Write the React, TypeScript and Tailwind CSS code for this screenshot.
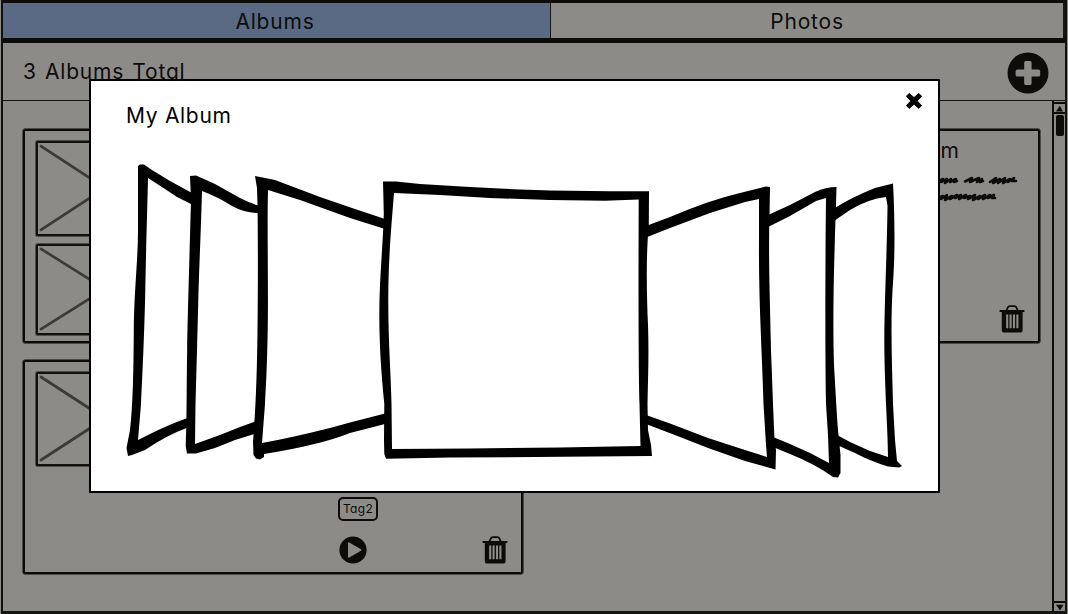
import React from "react";

const INK = "#0d0c0a";
const PAPER = "#8d8b88";

function TrashIcon() {
  return (
    <svg width="26" height="28" viewBox="0 0 26 28" className="block shrink-0">
      <path d="M7.5 5.5 L8.7 2.6 Q9.4 1.2 10.8 1.2 H15.4 Q16.8 1.2 17.5 2.6 L18.7 5.5" fill="none" stroke={INK} strokeWidth="1.8" />
      <path d="M0.6 4.9 H25.4 V6.9 H23.6 V25 Q23.6 27.6 21 27.6 H5.4 Q2.8 27.6 2.8 25 V6.9 H0.6 Z" fill={INK} />
      <path d="M8.2 9.4 V23.2 M11.6 9.4 V23.2 M15 9.4 V23.2 M18.4 9.4 V23.2" stroke={PAPER} strokeWidth="2.1" />
    </svg>
  );
}

function PlusIcon() {
  return (
    <svg width="42" height="42" viewBox="0 0 42 42" className="block shrink-0">
      <circle cx="21" cy="21" r="20.5" fill={INK} />
      <path
        d="M18.8 9 H23 Q24.6 9 24.6 10.6 V17.4 H31.5 Q33.2 17.4 33.2 19 V23 Q33.2 24.6 31.5 24.6 H24.6 V31.4 Q24.6 33 23 33 H18.8 Q17.2 33 17.2 31.4 V24.6 H10.3 Q8.6 24.6 8.6 23 V19 Q8.6 17.4 10.3 17.4 H17.2 V10.6 Q17.2 9 18.8 9 Z"
        fill={PAPER}
      />
    </svg>
  );
}

function PlayIcon() {
  return (
    <svg width="28" height="28" viewBox="0 0 28 28" className="block shrink-0">
      <circle cx="14" cy="14" r="13.6" fill={INK} />
      <path d="M9 7.3 Q9 5.9 10.3 6.6 L22 13.2 Q23 14 22 14.7 L10.3 21.4 Q9 22.1 9 20.7 Z" fill={PAPER} />
    </svg>
  );
}

function CloseIcon() {
  return (
    <svg width="16" height="16" viewBox="0 0 16 16" className="block">
      <path
        d="M3.2 0.4 L8 4.6 L12.8 0.4 L15.6 3.2 L11.2 7.9 L15.6 12.6 L12.8 15.4 L8 11.2 L3.2 15.4 L0.4 12.6 L4.8 7.9 L0.4 3.2 Z"
        fill="#000"
        stroke="#000"
        strokeWidth="0.9"
        strokeLinejoin="round"
      />
    </svg>
  );
}

function Scribble() {
  return (
    <svg width="150" height="30" viewBox="870 174 150 30" className="block">
      <g fill="none" stroke={INK} strokeWidth="2.6" strokeLinecap="round" strokeLinejoin="round">
        <path d="M936 182 L942 179 L940 182 L946 179 L944 183 L950 179 L949 182 L955 179 L953 182 L956 181" />
        <path d="M964 181.5 L971 178 L969 182 L971 181 L978 178 L976 182 L981 179 L979 182 L982 181" />
        <path d="M989 182 L995 178 L992 183 L999 179 L997 183 L1004 178 L1002 183 L1009 179 L1007 182 L1013 178 L1011 181 L1015 181" />
        <path d="M936 198 L942 196 L940 199 L946 195 L944 200 L951 196 L949 199 L956 195 L954 198 L960 195 L958 199 L965 195 L963 198 L969 196 L967 199 L974 195 L972 200 L979 196 L977 199 L984 195 L982 199 L989 195 L987 198 L993 195 L991 198 L994 198" />
      </g>
    </svg>
  );
}

function Thumb({ className }: { className: string }) {
  return (
    <div className={`w-[138px] rounded-[1px] border-2 border-[#12110f] shadow-[0_0_0_0.5px_#12110f] ${className}`}>
      <svg width="100%" height="100%" viewBox="0 0 134 90" preserveAspectRatio="none" className="block">
        <path d="M3 3 L131 86 M3 86 L131 3" stroke="#3b3a39" strokeWidth="2.7" strokeLinecap="round" />
      </svg>
    </div>
  );
}

function Carousel() {
  return (
    <svg width="790" height="325" viewBox="120 158 790 325" className="block">
      <g fill="#000">
        <path d="M138 166 L140 164.5 L144 164.5 L152 170 L170 181 L192 193 V204.5 L177 197 L165 189 L148 178 C147 220 146 250 145.3 290 C144.5 330 142.5 375 141 404 L138 440 L150 434 Q170 424 189 417.5 V427 Q165 436 145 450 L132 455 L128 456 L126.5 448 L130 430 C133 404 133.5 370 133.8 330 C134 290 138.5 255 138 225 Z" />
        <path d="M190 176 L196 175.5 L215 184 L240 198 Q250 203 258 205.5 V213 Q245 213 232 206 Q218 197 202 191 C201 230 199 270 198.3 300 L197 350 L195.5 404 L195 444 L220 435 L240 427 L258 420.5 V433 L235 440 L215 448 L196 453.5 L187 453.5 L185.7 446 C187 420 186.5 380 187.2 350 C187.5 320 190 240 191 200 Z" />
        <path d="M255 176 L275 180 L320 197 L352 208 L385 219 V229 L350 218 L300 200 L268 190 C267 230 268.5 290 267.7 330 C267 370 266 385 265 404 L262 443 Q290 438 330 428 L350 422.5 L385 413.5 V424 L350 433 Q320 445 264 454 L264 457 L260 459.5 L256 458.5 L253.5 455 L253 442 C256 404 257 370 257.5 330 C258 290 258 240 257.5 205 L257 188 Z" />
        <path
          fillRule="evenodd"
          d="M383 181.5 H396 L420 184 L470 187 L520 189.5 L550 190.5 L610 191.2 H649 L648.8 225 C646 255 646.5 290 648 325 C649 355 648 380 647.5 404 L648 430 L651 445 L652 456 L535 457 L450 457.5 L386 458.7 L384.3 454 L384 440 L384.3 404 C381 370 379.4 345 379.3 315 C379.2 280 383 245 383.8 214 Z M394 193 C392 220 388.5 255 388.3 295 C388 340 391 375 391.5 404 L392 449 L470 448.5 L560 447.5 L640.5 446 L639.5 404 C638.4 360 638.4 280 638.7 199.5 L605 200.7 L550 200 L490 198 L440 195 Z"
        />
        <path d="M646 226 L670 217 Q710 200 740 193 L766 186.5 L770 187 L769.5 215 C768.3 260 770 300 771 350 L773 404 L774.5 440 L776 450 L775.5 469.5 L745 461 L708 448 L680 437 L646 424 V415 L670 423.5 L708 438 L745 450 L767 457 L766 445 L763.5 404 C762 350 758.5 300 759 240 V199 L745 202 L710 213 L670 228 L646 237.5 Z" />
        <path d="M768 215 L790 205 L815 192 Q826 187 836.5 187 L836 205 C834 260 832.5 320 834 365 C835.5 390 836.5 410 838 430 L840.5 455 L840.5 473 L838 477.5 L833 477 Q815 464 790 454 L773 447 V437 L790 444 L810 453 L829 463 L828 435 L826 404 C825 350 825.3 260 826 198 L816 201 L790 216 L768 227 Z" />
        <path d="M834 208.5 Q850 198 875 188 L893 183.5 C894 200 895.5 240 893.5 275 C890 320 892 360 893 404 L895 440 L897 461 L902 466 L899 467.5 L888 466.5 Q870 461 855 453 L837 445 V435 L850 442 L870 451 L888 457 C888 430 884.5 390 884.3 340 C884.5 300 887 250 887.5 206 L886 197 Q868 199 850 210 L834 221 Z" />
      </g>
    </svg>
  );
}

export default function App() {
  return (
    <div className="relative flex h-[614px] w-[1068px] flex-col overflow-hidden bg-[#8d8b88] pl-px pr-px text-[21px] leading-6 text-[#0d0c0a] [font-family:Inter,'Noto_Sans',sans-serif] [font-feature-settings:'cv11'_1]">
      <div className="flex min-h-0 flex-1 flex-col border-x-2 border-[#10100f]">
        <nav className="flex h-[43px] shrink-0 border-t-[3px] border-b-[5px] border-[#0d0c0a]">
          <button className="flex w-[547px] items-center justify-center bg-[#5a6a84] pr-[3px] pt-[2px] tracking-[0.8px]">
            <span>Albums</span>
          </button>
          <button className="flex flex-1 items-center justify-center border-l border-r-2 border-[#171614] pt-[2px] tracking-[0.8px]">
            <span>Photos</span>
          </button>
        </nav>
        <header className="flex h-[58px] shrink-0 items-center justify-between border-b border-[#161513] pl-5 pr-4 pt-[2px]">
          <h1 className="pb-[2px] tracking-[0.8px] [word-spacing:1.5px]">3 Albums Total</h1>
          <PlusIcon />
        </header>
        <main className="flex min-h-0 flex-1">
          <div className="grid flex-1 grid-cols-[500px_500px] content-start gap-x-[17px] gap-y-[17px] pl-5 pt-[28px]">
            <section className="flex h-[214px] flex-col gap-2 rounded-[2px] border-2 border-[#0d0c0a] pl-[11px] pt-[10px] shadow-[0_0_0_0.5px_#0d0c0a]">
              <Thumb className="h-[95px]" />
              <Thumb className="h-[91px]" />
            </section>
            <section className="flex h-[214px] justify-end rounded-[2px] border-2 border-[#0d0c0a] pr-[13px] shadow-[0_0_0_0.5px_#0d0c0a]">
              <div className="flex w-[172px] flex-col pt-[8px]">
                <h2 className="pl-px tracking-[0.7px]">My Album</h2>
                <div className="pl-[18px] pt-[11px]">
                  <Scribble />
                </div>
                <div className="mt-auto flex justify-end pb-[8px]">
                  <TrashIcon />
                </div>
              </div>
            </section>
            <section className="flex h-[214px] justify-between rounded-[2px] border-2 border-[#0d0c0a] pl-[11px] pr-[13px] pt-[10px] shadow-[0_0_0_0.5px_#0d0c0a]">
              <Thumb className="h-[94px]" />
              <div className="flex w-[171px] flex-col justify-end pb-[8px]">
                <span className="mb-[15px] ml-px flex h-[24px] w-[40px] items-center justify-center rounded-[5px] border-2 border-[#0d0c0a] pb-px text-[12px] leading-none tracking-[0.3px]">
                  Tag2
                </span>
                <div className="flex justify-between pl-[2px]">
                  <PlayIcon />
                  <TrashIcon />
                </div>
              </div>
            </section>
          </div>
          <aside className="flex w-[13px] shrink-0 flex-col items-center border-l-2 border-[#0d0c0a] pt-px">
            <div className="flex h-[12px] w-full items-center justify-center border-y-2 border-[#0d0c0a]">
              <svg width="9" height="7" viewBox="0 0 9 7">
                <path d="M1 6.5 L4.8 0.7 L8 6.5 Z" fill={INK} />
              </svg>
            </div>
            <div className="mt-px h-[21px] w-[8px] rounded-[2px] bg-[#0d0c0a]" />
            <div className="mt-auto flex h-[10px] w-full items-center justify-center border-t-2 border-[#0d0c0a]">
              <svg width="9" height="7" viewBox="0 0 9 7">
                <path d="M1 0.8 H8.5 L5 6.5 Z" fill={INK} />
              </svg>
            </div>
          </aside>
        </main>
      </div>
      <div className="h-[3px] shrink-0 bg-[#151515]" />

      <div
        role="dialog"
        className="absolute left-[89px] top-[79px] flex h-[414px] w-[851px] flex-col rounded-[1px] border-2 border-black bg-white text-black"
      >
        <div className="flex h-[77px] shrink-0 items-start justify-between pl-[35px] pr-[16px]">
          <h2 className="pt-[23px] tracking-[0.7px]">My Album</h2>
          <button className="mt-[12px]">
            <CloseIcon />
          </button>
        </div>
        <div className="pl-[29px]">
          <Carousel />
        </div>
      </div>
    </div>
  );
}
